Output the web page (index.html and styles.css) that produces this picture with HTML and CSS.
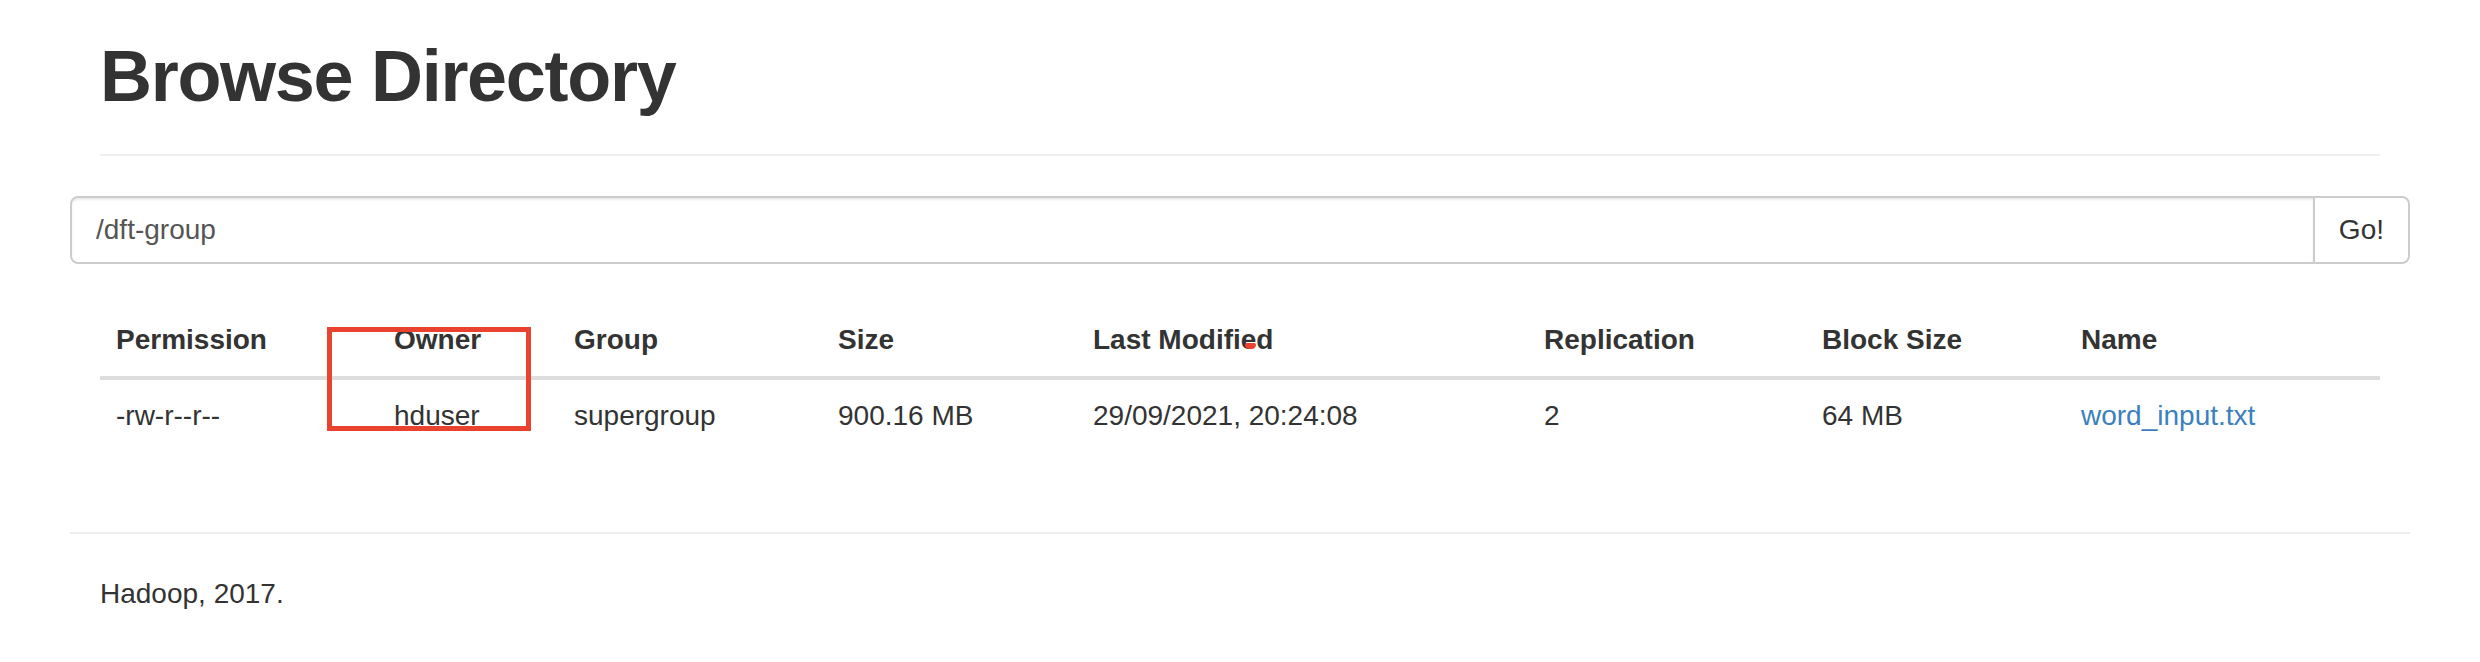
FILE: index.html
```html
<!DOCTYPE html>
<html lang="en">
<head>
<meta charset="utf-8">
<title>Browsing HDFS</title>
<link rel="stylesheet" href="styles.css">
</head>
<body>
<div class="container">
  <div class="page-header">
    <h1>Browse Directory</h1>
  </div>
  <div class="row">
    <form class="input-group" onsubmit="return false;">
      <input type="text" class="form-control" value="/dft-group">
      <span class="input-group-btn"><button class="btn" type="submit">Go!</button></span>
    </form>
  </div>
  <div class="panel">
    <table class="table">
      <colgroup>
        <col class="c-perm"><col class="c-owner"><col class="c-group"><col class="c-size">
        <col class="c-mod"><col class="c-repl"><col class="c-block"><col class="c-name">
      </colgroup>
      <thead>
        <tr>
          <th>Permission</th><th>Owner</th><th>Group</th><th>Size</th>
          <th>Last Modified</th><th>Replication</th><th>Block Size</th><th>Name</th>
        </tr>
      </thead>
      <tbody>
        <tr>
          <td>-rw-r--r--</td><td>hduser</td><td>supergroup</td><td>900.16 MB</td>
          <td>29/09/2021, 20:24:08</td><td>2</td><td>64 MB</td>
          <td><a class="file-link" href="#">word_input.txt</a></td>
        </tr>
      </tbody>
    </table>
  </div>
  <div class="row footer">
    <hr>
    <div class="col-xs-2"><p>Hadoop, 2017.</p></div>
  </div>
</div>
<div class="mark-box"></div>
<div class="mark-dot"></div>
</body>
</html>
```
FILE: styles.css
```css
* { box-sizing: border-box; }
html, body { margin: 0; padding: 0; background: #fff; }
body {
  font-family: "Liberation Sans", Arial, Helvetica, sans-serif;
  font-size: 28px;
  line-height: 40px;
  color: #333;
  position: relative;
  min-height: 662px;
}
.container {
  width: 2340px;
  margin: 0 auto;
  padding: 37px 30px 0;
}
.page-header {
  margin: 0 0 40px;
  padding-bottom: 18px;
  border-bottom: 2px solid #eee;
}
.page-header h1 {
  margin: 0 0 20px;
  font-size: 72px;
  line-height: 79.2px;
  font-weight: 700;
  letter-spacing: -1.3px;
  color: #333;
}
.row { margin: 0 -30px; }
.input-group {
  display: flex;
  margin: 0;
  height: 68px;
}
.form-control {
  flex: 1;
  height: 68px;
  padding: 12px 24px;
  font-family: inherit;
  font-size: 28px;
  line-height: 40px;
  color: #555;
  background: #fff;
  border: 2px solid #ccc;
  border-radius: 8px 0 0 8px;
  box-shadow: inset 0 2px 2px rgba(0,0,0,.075);
  outline: none;
}
.input-group-btn { display: flex; }
.btn {
  margin-left: -2px;
  height: 68px;
  padding: 12px 24px;
  font-family: inherit;
  font-size: 28px;
  line-height: 40px;
  color: #333;
  background: #fff;
  border: 2px solid #ccc;
  border-radius: 0 8px 8px 0;
  cursor: pointer;
}
.panel { margin-top: 40px; display: flow-root; }
.table {
  width: 100%;
  table-layout: fixed;
  border-collapse: collapse;
  border-spacing: 0;
  margin-bottom: 40px;
}
.table th, .table td {
  padding: 16px;
  text-align: left;
  line-height: 40px;
  white-space: nowrap;
}
.table th {
  font-weight: 700;
  vertical-align: bottom;
  border-bottom: 4px solid #ddd;
}
.table td {
  vertical-align: top;
  border-top: 2px solid #ddd;
}
.c-perm { width: 278px; }
.c-owner { width: 180px; }
.c-group { width: 264px; }
.c-size { width: 255px; }
.c-mod { width: 451px; }
.c-repl { width: 278px; }
.c-block { width: 259px; }
.c-name { width: 315px; }
.file-link { color: #3b80c0; text-decoration: none; }
.footer { display: flow-root; }
.footer hr {
  margin: 40px 0;
  border: 0;
  border-top: 2px solid #eee;
  height: 0;
}
.col-xs-2 { padding: 0 30px; }
.col-xs-2 p { margin: 0 0 20px; }
.mark-box {
  position: absolute;
  left: 327px;
  top: 327px;
  width: 204px;
  height: 104px;
  border: 5px solid #e9432f;
}
.mark-dot {
  position: absolute;
  left: 1245px;
  top: 343px;
  width: 11px;
  height: 6px;
  border-radius: 2px 2px 5px 5px;
  background: #e9432f;
}
```
